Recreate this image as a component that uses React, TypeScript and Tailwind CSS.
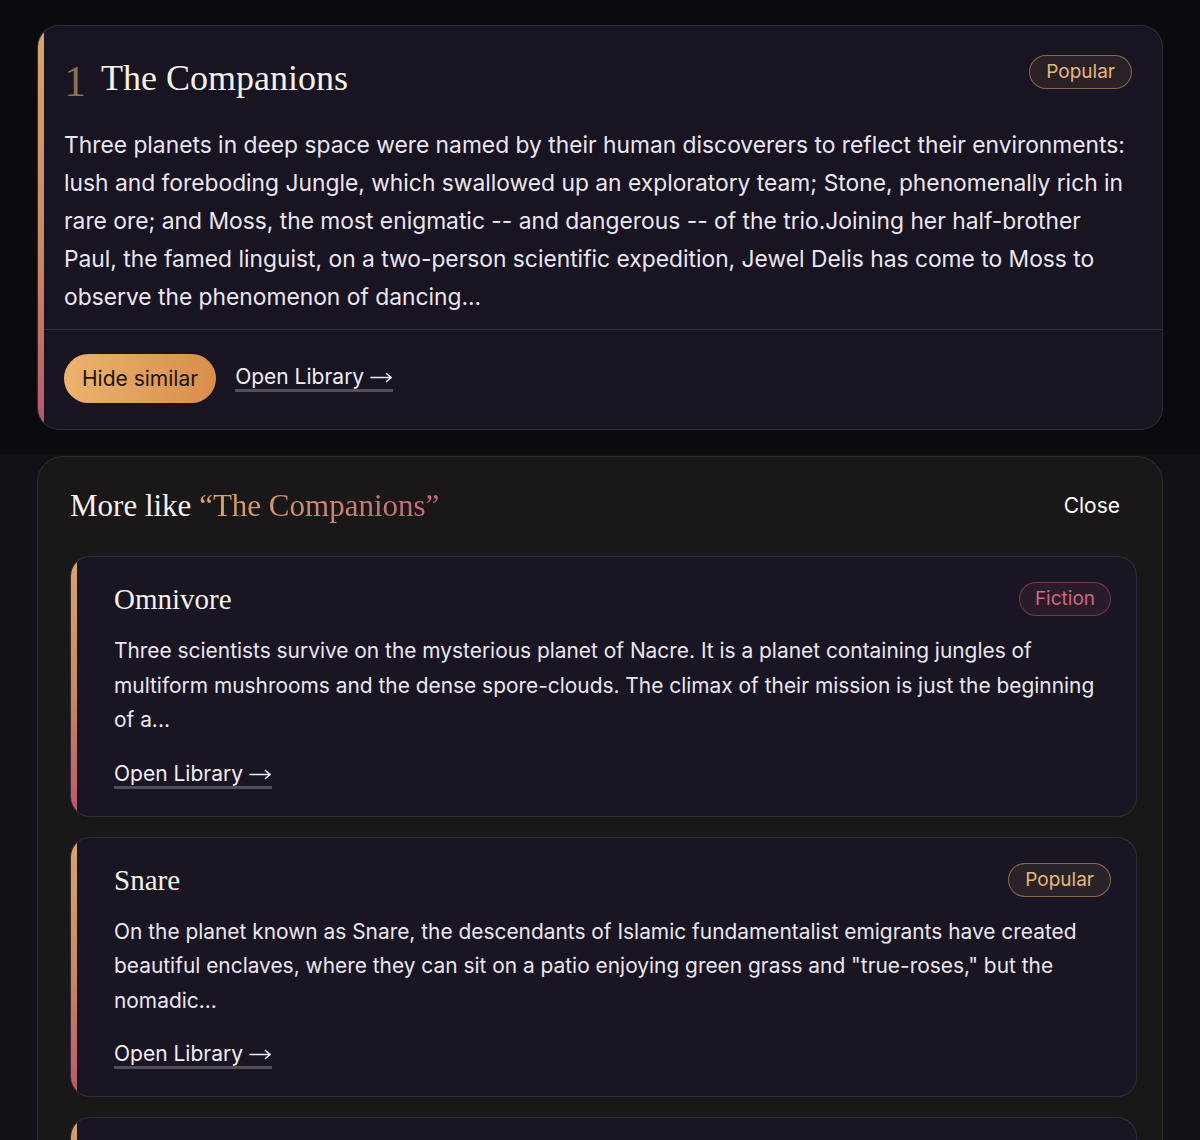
import React from 'react';

const sans = "font-['Inter','Noto_Sans',sans-serif]";
const serif = "font-['Liberation_Serif','DejaVu_Serif',serif]";

type Book = { title: string; tag: 'Popular' | 'Fiction'; blurb: string };

const similar: Book[] = [
  {
    title: 'Omnivore',
    tag: 'Fiction',
    blurb:
      'Three scientists survive on the mysterious planet of Nacre. It is a planet containing jungles of multiform mushrooms and the dense spore-clouds. The climax of their mission is just the beginning of a...',
  },
  {
    title: 'Snare',
    tag: 'Popular',
    blurb:
      'On the planet known as Snare, the descendants of Islamic fundamentalist emigrants have created beautiful enclaves, where they can sit on a patio enjoying green grass and "true-roses," but the nomadic...',
  },
];

function Tag({ kind }: { kind: 'Popular' | 'Fiction' }) {
  if (kind === 'Fiction') {
    return (
      <span className="inline-block rounded-full border border-[#c2566e]/50 bg-[#c2566e]/10 px-[15px] py-[4px] text-[19px] leading-[24px] text-[#d0687e]">
        Fiction
      </span>
    );
  }
  return (
    <span className="inline-block rounded-full border border-[#c9995f]/60 bg-[#c9995f]/10 px-[16px] py-[4px] text-[19px] leading-[24px] text-[#e4b77c]">
      Popular
    </span>
  );
}

function OpenLibrary() {
  return (
    <a className="inline-flex items-center gap-[6px] border-b-[3px] border-white/25 text-[21px] leading-[24px] text-[#f1edf4]" href="#">
      Open Library
      <svg width="23" height="12" viewBox="0 0 23 12" fill="none" stroke="currentColor" strokeWidth="1.6" strokeLinecap="round" strokeLinejoin="round">
        <path d="M1 6.5h20" />
        <path d="M16.5 2.5l4.5 4-4.5 4" />
      </svg>
    </a>
  );
}

export default function App() {
  return (
    <div className={`${sans} h-[1140px] overflow-hidden bg-[#0b0a0e] text-[#ece8f0]`}>
      <div className="px-[37px] pt-[25px] pb-[24px]">
        {/* selected book */}
        <div className="overflow-hidden rounded-[22px] border border-white/10 bg-[#191422]">
          <div className="flex border-l-[6px] border-transparent [border-image:linear-gradient(to_bottom,#d8a66a,#c9865f_60%,#b8566c)_1]">
            <div className="flex-1">
              <div className="pl-[20px] pr-[29px] pt-[26px] pb-[13px]">
                <div className="flex items-center justify-between">
                  <div className="flex items-baseline gap-[15px]">
                    <span className={`${serif} translate-y-[6px] text-[44px] leading-[48px] text-[#8b7050]`}>1</span>
                    <h1 className={`${serif} text-[36px] leading-[48px] text-[#f6f1ea]`}>The Companions</h1>
                  </div>
                  <div className="mr-[1px] -mt-[10px]">
                    <Tag kind="Popular" />
                  </div>
                </div>
                <p className="mt-[24px] text-[22.8px] leading-[38px] text-[#ebe7f0]">
                  Three planets in deep space were named by their human discoverers to reflect their environments: lush and foreboding Jungle, which swallowed up an exploratory team; Stone, phenomenally rich in rare ore; and Moss, the most enigmatic -- and dangerous -- of the trio.Joining her half-brother Paul, the famed linguist, on a two-person scientific expedition, Jewel Delis has come to Moss to observe the phenomenon of dancing...
                </p>
              </div>
              <div className="flex items-center gap-[19px] border-t border-white/10 px-[20px] pt-[24px] pb-[26px]">
                <button className="rounded-full bg-gradient-to-r from-[#eab46f] to-[#d98d4c] px-[18px] py-[12px] text-[21px] leading-[25px] text-[#1d140f]">
                  Hide similar
                </button>
                <OpenLibrary />
              </div>
            </div>
          </div>
        </div>
      </div>

      {/* similar panel */}
      <div className="bg-[#131117] px-[37px] pt-[2px]">
        <div className="rounded-t-[26px] border border-b-0 border-[#3a2f2a]/80 bg-[#1a1718] pl-[32px] pr-[25px] pt-[29px]">
          <div className="flex items-center justify-between">
            <h2 className={`${serif} text-[31px] leading-[40px] text-[#f6f1ea]`}>
              More like{' '}
              <span className="bg-gradient-to-r from-[#d8a66a] to-[#c0687a] bg-clip-text text-transparent">
                “The Companions”
              </span>
            </h2>
            <button className="mr-[17px] text-[21px] text-white">Close</button>
          </div>

          <div className="mt-[30px] flex flex-col gap-[20px]">
            {similar.map((b) => (
              <div key={b.title} className="overflow-hidden rounded-[20px] border border-white/10 bg-[#191523]">
                <div className="border-l-[6px] border-transparent pl-[37px] pr-[30px] pt-[23px] pb-[27px] [border-image:linear-gradient(to_bottom,#d8a66a,#c9865f_55%,#b8566c)_1]">
                  <div className="flex items-center justify-between">
                    <h3 className={`${serif} text-[29px] leading-[38px] text-[#f6f1ea]`}>{b.title}</h3>
                    <div className="-mr-[5px]">
                      <Tag kind={b.tag} />
                    </div>
                  </div>
                  <p className="mt-[16px] text-[20.9px] leading-[34.5px] text-[#ebe7f0]">
                    {b.blurb}
                  </p>
                  <div className="mt-[24px]">
                    <OpenLibrary />
                  </div>
                </div>
              </div>
            ))}
            {/* next card, only its top edge is in view */}
            <div className="h-[120px] overflow-hidden rounded-[20px] border border-white/10 bg-[#191523]">
              <div className="h-full border-l-[6px] border-transparent [border-image:linear-gradient(to_bottom,#d8a66a,#c9865f_55%,#b8566c)_1]" />
            </div>
          </div>
        </div>
      </div>
    </div>
  );
}
